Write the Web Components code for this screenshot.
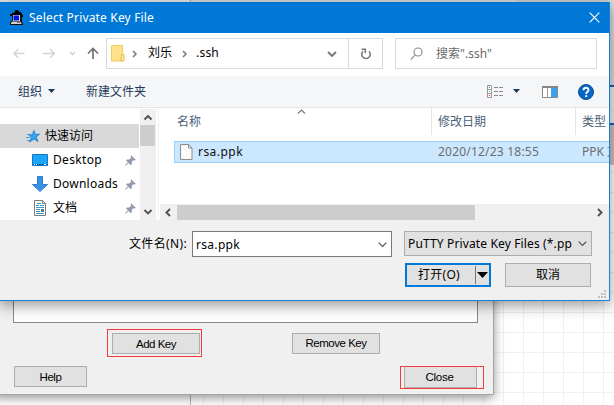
<!DOCTYPE html>
<html lang="zh-CN">
<head>
<meta charset="utf-8">
<title>Select Private Key File</title>
<style>
html,body{margin:0;width:614px;height:405px;overflow:hidden;background:#fff;font:12px/16px "Noto Sans","Noto Sans CJK SC",sans-serif;color:#000}
</style>
</head>
<body>
<desk-canvas>
  <key-window></key-window>
  <file-dialog></file-dialog>
</desk-canvas>
<script>
const make = (name, html, extra = {}) => {
  const t = document.createElement('template');
  t.innerHTML = html;
  customElements.define(name, class extends HTMLElement {
    constructor() { super(); this.attachShadow({ mode: 'open' }).append(t.content.cloneNode(true)); }
    connectedCallback() { if (extra.connect) extra.connect(this); }
  });
};

/* One-line text spread over a given advance width (w). */
make('fit-text', `<style>:host{display:inline-block;flex:none;white-space:pre;height:16px;line-height:16px}span{display:inline-block}</style><span><slot></slot></span>`, {
  connect(el) {
    const w = parseFloat(el.getAttribute('w')), s = el.shadowRoot.querySelector('span');
    if (!w) return;
    el.style.width = w + 'px';
    const n = [...el.textContent].length;
    s.style.letterSpacing = ((w - s.getBoundingClientRect().width) / n).toFixed(3) + 'px';
  }
});

make('desk-canvas', `<style>
:host{display:block;position:relative;width:614px;height:405px;overflow:hidden;background:
 linear-gradient(#b9b9b9,#b9b9b9) 190px 0/1px 100% no-repeat,
 linear-gradient(#fff,#fff) 0 0/190px 100% no-repeat,
 repeating-linear-gradient(90deg,#f0f0f0 0 1px,transparent 1px 20px) 203px 0,
 repeating-linear-gradient(#f0f0f0 0 1px,transparent 1px 20px) 0 12px,#fff}
.top{position:absolute;left:0;top:0;width:614px;height:3px;background:linear-gradient(90deg,#e6e6e6 0 190px,#aaa 190px 191px,#dadada 191px 516px,#d0d0d0 516px)}
.side{position:absolute;left:609px;top:0;width:5px;height:165px;background:linear-gradient(#dcdcdc 0 85px,#0a66b7 85px 87px,#eee 87px 123px,#0a66b7 123px 125px,#d2c0bd 125px)}
</style><div class="top"></div><div class="side"></div><slot></slot>`);

make('push-button', `<style>
:host{box-sizing:border-box;display:flex;align-items:center;justify-content:center;flex:none;background:#e1e1e1;border:1px solid #adadad}
</style><slot></slot>`);

make('key-window', `<style>
:host{box-sizing:border-box;position:absolute;left:-6px;top:20px;width:500px;height:375px;background:#f0f0f0;border:1px solid #a5a5a5;box-shadow:0 3px 10px rgba(0,0,0,.42);font-family:"Liberation Sans",Arial,sans-serif;font-size:11.5px;padding:0 15px 0 18px;display:flex;flex-direction:column}
.list{box-sizing:border-box;height:302px;border:1px solid #828790;background:#fff;flex:none}
.row{display:flex;flex:none}
.r1{padding:6px 0 0 94px;align-items:center}
.mark{box-sizing:border-box;border:1px solid #f33b3b;display:flex;padding:3px 1px 2px 4px;width:95px;height:28px}
.r1 push-button{width:88px;height:21px}
.r2{margin-top:9px;padding-left:1px}
.r2 push-button{width:73px;height:21px}
.m2{width:84px;height:23px;padding:0 0 0 3px;margin-left:313px;margin-right:-10px}
.m2 push-button{margin-top:-1px;border-top-color:#f33b3b;height:22px}
</style>
<div class="list"></div>
<div class="row r1"><div class="mark"><push-button><fit-text w="40">Add Key</fit-text></push-button></div><push-button style="margin-left:90px"><fit-text w="61">Remove Key</fit-text></push-button></div>
<div class="row r2"><push-button><fit-text w="22">Help</fit-text></push-button><div class="mark m2"><push-button><fit-text w="28" style="margin-right:2px">Close</fit-text></push-button></div></div>`);

make('file-dialog', `<style>
:host{box-sizing:border-box;position:absolute;left:-1px;top:2px;width:611px;height:299px;background:#f0f0f0;border:1px solid #1b7fd4;border-top:0;box-shadow:0 4px 14px rgba(0,0,0,.42);display:flex;flex-direction:column;overflow:visible}
</style><title-bar></title-bar><nav-bar></nav-bar><tool-bar></tool-bar><file-browser></file-browser><dialog-footer></dialog-footer>`);

make('title-bar', `<style>
:host{display:flex;align-items:center;height:31px;flex:none;background:#0078d7;color:#fff;box-sizing:border-box;padding:0 9px 0 9px}
fit-text{margin-left:5px;flex:none;margin-top:1px}
.x{margin-left:auto}
</style>
<svg width="15" height="16" viewBox="0 0 15 16"><path d="M3 4h10v8H3z" fill="#111"/><path d="M1 4h2V3h2V2h1V0h3v1h1v1h2v1h1v2h1v2h-2V5H3v1H1z" fill="#000"/><path d="M4 5h7v6H4z" fill="#ddd"/><path d="M4.500 5.500h5.500v5H4.500z" fill="#0011e8"/><path d="M2 11h10l2 2v2H1v-3z" fill="#111"/><path d="M3 11.500h8l1.500 1.500v1H2v-1z" fill="#d0d0d0"/><path d="M8 12h3v1H8z" fill="#777"/></svg>
<fit-text w="125">Select Private Key File</fit-text>
<svg class="x" width="11" height="11" viewBox="0 0 11 11"><path d="M.7.700l9.600 9.600M10.300.700L.7 10.300" stroke="#fff" stroke-width="1.150"/></svg>`);

make('nav-bar', `<style>
:host{display:flex;align-items:flex-start;height:43px;box-sizing:border-box;padding:5px 0 0 12px;flex:none;background:#fff}
.arrows{display:flex;width:94px;height:31px;flex:none}
.addr{box-sizing:border-box;width:277px;height:31px;border:1px solid #d9d9d9;display:flex;align-items:center;padding-left:4px}
.addr fit-text{margin-top:-2px}
.ref{height:29px;width:33px;border-left:1px solid #d9d9d9;display:flex;align-items:center;justify-content:center}
.search{box-sizing:border-box;width:202px;height:31px;border:1px solid #d9d9d9;margin-left:12px;display:flex;align-items:center;padding-left:14px;color:#6a6a6a}
</style>
<div class="arrows"><svg width="94" height="31" viewBox="0 0 94 31" fill="none"><path d="M12.500 15.500H2M6.500 11L2 15.500 6.500 20M31 15.500h11.500M38 11l4.500 4.500L38 20" stroke="#d4d4d4" stroke-width="1.400"/><path d="M58 14l2.500 2.500L63 14" stroke="#d0d0d0" stroke-width="1.500"/><path d="M81 21V10.500M76 15.500l5-5 5 5" stroke="#737373" stroke-width="1.700"/></svg></div>
<div class="addr"><svg width="14" height="17" viewBox="0 0 14 17"><path d="M.5.500h11v15.500H.5z" fill="#ffe28a" stroke="#f3cd61"/><path d="M10.500 9.500h2.500V16h-3z" fill="#ffe9a5" stroke="#e9bd48"/></svg>
<svg width="6" height="8" style="margin:1px 10px 0 7px"><path d="M1 1l3 3-3 3" fill="none" stroke="#777" stroke-width="1.500"/></svg><fit-text w="24">刘乐</fit-text>
<svg width="6" height="8" style="margin:1px 8px 0 10px"><path d="M1 1l3 3-3 3" fill="none" stroke="#777" stroke-width="1.500"/></svg><fit-text w="23">.ssh</fit-text>
<svg width="10" height="7" style="margin:1px 11px 0 auto"><path d="M1 1l4 4 4-4" fill="none" stroke="#777" stroke-width="1.900"/></svg>
<div class="ref"><svg width="12" height="12" viewBox="0 0 12 12" fill="none" stroke="#777"><path d="M3 3.200A4.300 4.300 0 1 0 9 3.200" stroke-width="1.500"/><path d="M1.500 1.300H5.300V5.200" stroke-width="1.500"/></svg></div></div>
<div class="search"><svg width="14" height="14" viewBox="0 0 14 14" fill="none" stroke="#8a858a" stroke-width="1.100"><circle cx="8" cy="5" r="4"/><path d="M5 8L.8 12.600"/></svg><fit-text w="56" style="margin-left:12px">搜索".ssh"</fit-text></div>`);

make('tool-bar', `<style>
:host{display:flex;align-items:center;height:32px;box-sizing:border-box;flex:none;background:#f5f6f7;border-bottom:1px solid #e6e6e6;padding:0 15px 0 18px;color:#1e395b}
svg{flex:none}
</style>
<fit-text w="24">组织</fit-text><svg width="8" height="5" style="margin:0 30px 0 6px"><path d="M0 0h7L3.500 4z" fill="#1e395b"/></svg><fit-text w="60">新建文件夹</fit-text>
<svg style="margin-left:auto" width="17" height="13" viewBox="0 0 17 13"><path d="M.5.500h4v12h-4zM.5 4.500h4M.5 8.500h4" fill="#fff" stroke="#999"/><path d="M2 2h1v1H2z" fill="#36a"/><path d="M2 6h1v1H2z" fill="#498"/><path d="M2 10h1v1H2z" fill="#e11"/><path d="M7 2.500h4m1 0h4M7 6.500h4m1 0h4M7 10.500h4m1 0h4" stroke="#888"/></svg>
<svg width="8" height="5" style="margin:0 21px 0 9px"><path d="M0 0h7L3.500 4z" fill="#1e395b"/></svg>
<svg width="16" height="12" viewBox="0 0 16 12"><path d="M.5.500h15v11H.5z" fill="#fff" stroke="#888"/><path d="M0 0h16v2H0z" fill="#858585"/><path d="M5.500 2v10" stroke="#999"/><path d="M9 2h6v9H9z" fill="#3ba1ee"/></svg>
<svg width="16" height="16" viewBox="0 0 16 16" style="margin-left:20px"><circle cx="8" cy="8" r="7.500" fill="#0867c4" stroke="#084f97"/><path d="M5.500 6.200C5.500 3 10.500 3 10.500 6c0 1.700-2.300 1.900-2.300 4" fill="none" stroke="#fff" stroke-width="1.900"/><path d="M7.200 11.200h2v1.900h-2z" fill="#fff"/></svg>`);

make('side-item', `<style>
:host{display:flex;align-items:center;height:24px;box-sizing:border-box;padding-left:32px;flex:none}
:host([selected]){background:#d9d9d9;padding-left:26px}
fit-text,::slotted(fit-text){margin-left:5px}
.pin{margin:0 3px 0 auto}
:host([selected]) .pin{display:none}
</style><slot></slot><svg class="pin" width="11" height="11" viewBox="0 0 11 11"><path d="M6 0l5 5-1.500.500-.8-.4-2 2 .1 2.300L5.500 10 3.600 8 .5 10.800 0 10.300 2.900 7.300 1 5.300l1-.900 2.200.1 2-2-.4-1z" fill="#929ca8"/></svg>`);

make('file-browser', `<style>
:host{display:flex;height:110px;padding-top:2px;box-sizing:content-box;flex:none;background:#fff}
.side{width:139px;height:96px;padding-top:14px;flex:none;overflow:hidden;display:flex;flex-direction:column}
.vs{width:16px;height:111px;margin-top:-1px;margin-left:1px;background:#f0f0f0;flex:none;display:flex;flex-direction:column;align-items:flex-start}
.vs svg{margin-left:-.5px}
.vs i{display:block;width:15px;height:21px;background:#cdcdcd}
.main{flex:1;min-width:0;margin:-2px 0 0 2px;border-left:1px solid #f0f0f0;display:flex;flex-direction:column;overflow:hidden;height:112px}
.head{display:flex;height:27px;color:#4c607a;margin-left:15px;align-items:center;flex:none}
.c{box-sizing:border-box;flex:none;height:27px;display:flex;align-items:center;border-right:1px solid #e5e5e5}
.row{box-sizing:border-box;display:flex;align-items:center;margin:6px 0 0 15px;height:22px;background:#cce8ff;border:1px solid #99d1ff;border-right:0;flex:none;color:#6d6d6d;overflow:hidden;width:435px}
.hs{display:flex;align-items:center;height:16px;background:#f0f0f0;margin:auto 0 0 1px;flex:none}
.hs i{display:block;width:298px;height:15px;background:#cdcdcd}
</style>
<div class="side">
<side-item selected><svg width="14" height="13" viewBox="0 0 14 13"><path d="M8 .5l1.300 3.900 4.200-.2-3.300 2.700 1.700 4.600-3.900-2.500L3.700 12l1.700-4.500L2.800 5l3.500-.3z" fill="#36a4ee" stroke="#157bd1" stroke-width=".8"/><path d="M1 4.500h3M0 7.500h4M1 10.500h3" stroke="#4c9dd6"/></svg><fit-text w="48">快速访问</fit-text></side-item>
<side-item><svg width="16" height="12" viewBox="0 0 16 12"><path d="M.5.500h15v11H.5z" fill="#1aa5fb" stroke="#1278c5"/><path d="M1 10.500h14" stroke="#125f9e"/><path d="M2 10.500h1m1 0h1m7 0h2" stroke="#fff"/></svg><fit-text w="49">Desktop</fit-text></side-item>
<side-item><svg width="16" height="16" viewBox="0 0 16 16"><path d="M5.500.5h5v8h5L8 15.500.5 8.500h5z" fill="#3b93e3" stroke="#2b7ece"/></svg><fit-text w="65">Downloads</fit-text></side-item>
<side-item><svg width="16" height="16" viewBox="0 0 16 16"><path d="M2.500.5h8l3 3v12h-11z" fill="#fff" stroke="#7c7c7c"/><path d="M10.500.5v3h3" fill="none" stroke="#7c7c7c"/><path d="M4 5.500h3m1 0h4M4 7.500h8M4 9.500h4M4 11.500h4M4 13.500h8" stroke="#3f94c9"/><path d="M9 9h3v3H9z" fill="#567b96"/><path d="M5 3.500h4" stroke="#3189d5"/></svg><fit-text w="24">文档</fit-text></side-item>
</div>
<div class="vs"><svg width="16" height="16"><path d="M4.500 10.500L8 7l3.500 3.500" fill="none" stroke="#505050" stroke-width="1.900"/></svg><i></i><svg width="16" height="17" style="margin-top:auto"><path d="M4.500 7L8 10.500 11.500 7" fill="none" stroke="#505050" stroke-width="1.900"/></svg></div>
<div class="main">
<div class="head"><div class="c" style="width:258px;padding-left:3px"><fit-text w="24">名称</fit-text><svg width="9" height="6" style="margin:-20px 0 0 96px"><path d="M1 4.500l3.500-3.500L8 4.500" fill="none" stroke="#777" stroke-width="1.100"/></svg></div><div class="c" style="width:144px;padding-left:6px"><fit-text w="48">修改日期</fit-text></div><fit-text w="24" style="margin-left:6px">类型</fit-text></div>
<div class="row"><svg width="13" height="16" viewBox="0 0 13 16" style="margin-left:5px;flex:none"><path d="M.5.500h8l3.500 3.500v11.500H.5z" fill="#fafafa" stroke="#8c8c8c"/><path d="M8.500.5V4H12" fill="none" stroke="#8c8c8c"/></svg><fit-text w="45" style="margin-left:5px;color:#111">rsa.ppk</fit-text><fit-text w="101" style="margin-left:195px">2020/12/23 18:55</fit-text><fit-text w="22" style="margin-left:43px">PPK</fit-text><fit-text w="24" style="margin-left:3px">文件</fit-text></div>
<div class="hs"><svg width="17" height="15" style="flex:none"><path d="M10 4L6.500 7.500 10 11" fill="none" stroke="#505050" stroke-width="1.900"/></svg><i></i><svg width="16" height="15" style="margin:0 1px 0 auto"><path d="M6 4l3.500 3.500L6 11" fill="none" stroke="#505050" stroke-width="1.900"/></svg></div>
</div>`);

make('dialog-footer', `<style>
:host{display:flex;flex-direction:column;flex:1;padding:11px 0 0;position:relative}
.r{display:flex;flex:none;align-items:flex-start}
.label{margin:5px 0 0 129px}
.combo{box-sizing:border-box;display:flex;align-items:center;border:1px solid #7a7a7a;background:#fff}
.combo svg{margin-left:auto}
.a{width:200px;height:26px;margin-left:5px;padding:1px 4px 0 3px}
.b{width:188px;height:25px;margin-left:12px;padding:0 4px 0 3px;background:#e1e1e1;border-color:#adadad}
.two{margin:6px 0 0 405px}
.open{width:86px;height:24px;border:2px solid #0078d7;justify-content:flex-start;padding-left:11px}
.open i{width:1px;height:18px;background:#777;margin-left:15px}
.cancel{width:86px;height:24px;margin-left:14px}
.grip{position:absolute;right:3px;bottom:2px}
</style>
<div class="r"><fit-text class="label" w="58">文件名(N):</fit-text><div class="combo a"><fit-text w="44">rsa.ppk</fit-text><svg width="9" height="6"><path d="M.7.700l3.800 3.800L8.300.700" fill="none" stroke="#505050" stroke-width="1.200"/></svg></div><div class="combo b"><fit-text w="164">PuTTY Private Key Files (*.pp</fit-text><svg width="9" height="6"><path d="M.7.700l3.800 3.800L8.300.700" fill="none" stroke="#505050" stroke-width="1.200"/></svg></div></div>
<div class="r two"><push-button class="open"><fit-text w="42">打开(O)</fit-text><i></i><svg width="12" height="7" style="margin-left:1px"><path d="M0 0h11L5.500 6z" fill="#000"/></svg></push-button><push-button class="cancel"><fit-text w="24">取消</fit-text></push-button></div>
<svg class="grip" width="8" height="8"><path d="M6 0h2v2H6zM3 3h2v2H3zM6 3h2v2H6zM0 6h2v2H0zM3 6h2v2H3zM6 6h2v2H6z" fill="#bfbfbf"/></svg>`);
</script>
</body>
</html>
